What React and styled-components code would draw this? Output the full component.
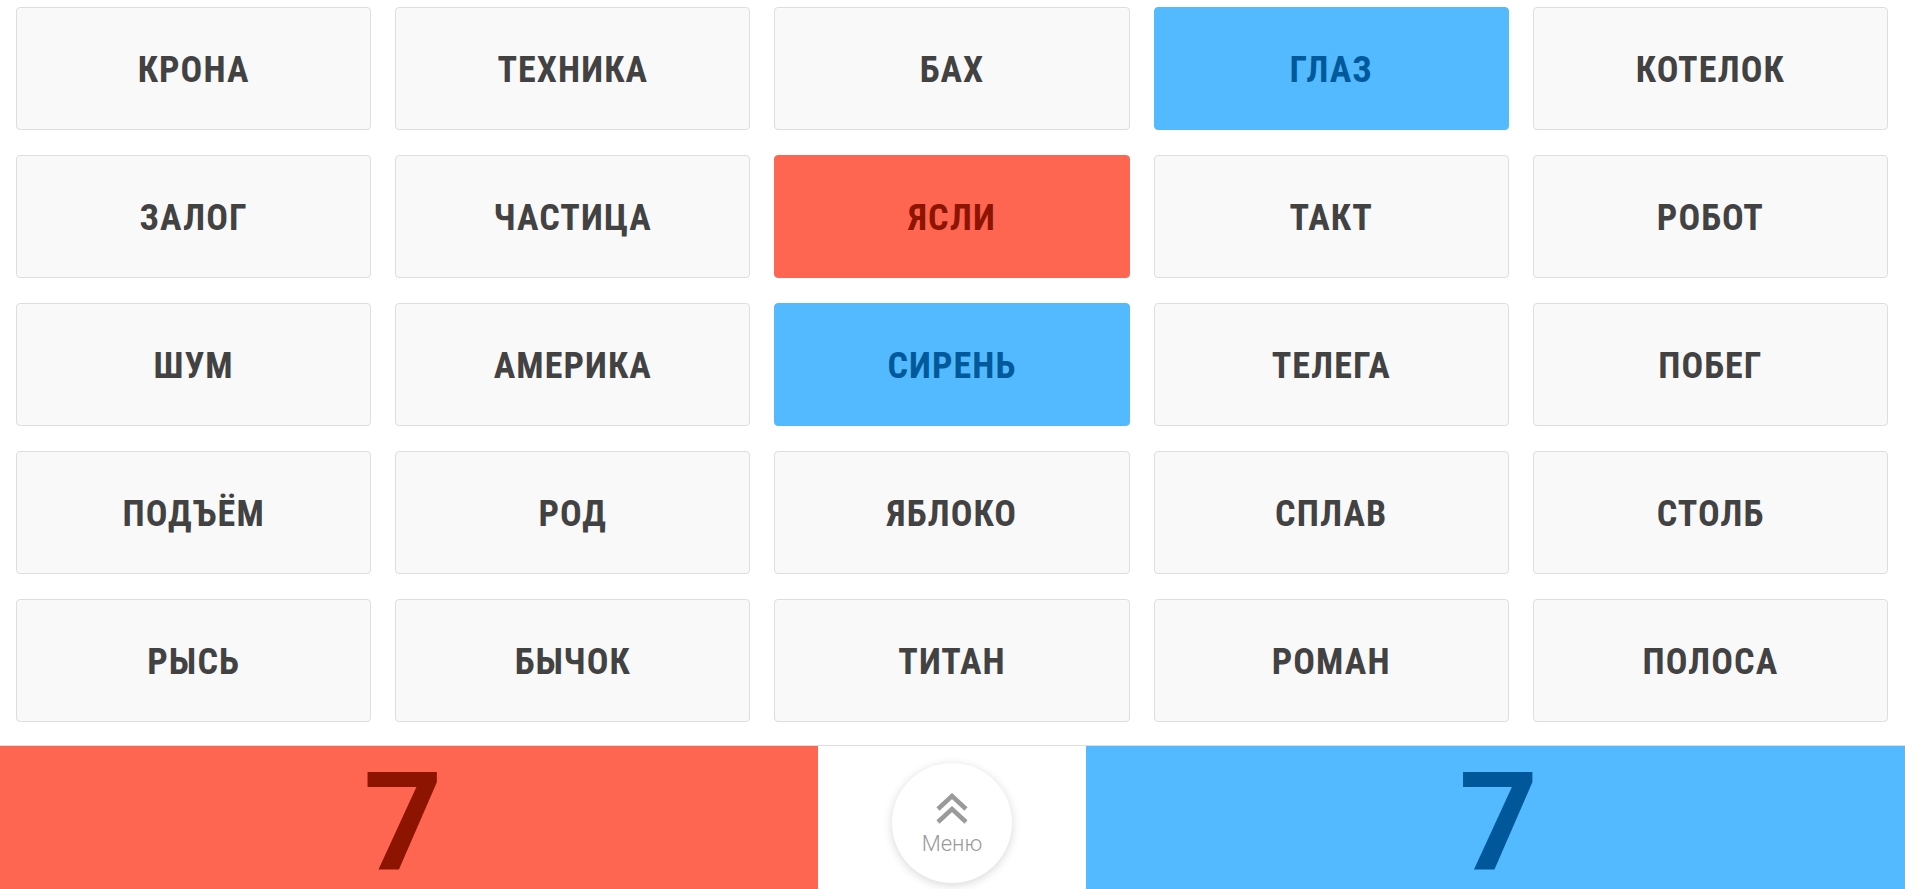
import React from 'react';
import styled, { createGlobalStyle } from 'styled-components';

const GlobalStyle = createGlobalStyle`
    html, body {
        margin: 0;
        padding: 0;
        background: #fff;
        font-family: Roboto, "Liberation Sans", sans-serif;
        overflow: hidden;
    }
`;

const Page = styled.div`
    width: 100%;
    display: flex;
    flex-direction: column;
`;

const Board = styled.div`
    display: grid;
    grid-template-columns: repeat(5, 1fr);
    column-gap: 24px;
    row-gap: 25px;
    padding: 7px 17px 0 16px;
    margin-bottom: 23px;
`;

const cardColors = {
    neutral: { bg: '#f9f9f9', border: '#dedede', text: '#424242' },
    red: { bg: '#ff6652', border: '#ff6652', text: '#8c1400' },
    blue: { bg: '#53baff', border: '#53baff', text: '#00599a' },
};

const Card = styled.div`
    height: 123px;
    box-sizing: border-box;
    padding-top: 3px;
    display: flex;
    align-items: center;
    justify-content: center;
    background: ${p => cardColors[p.$kind].bg};
    border: 1px solid ${p => cardColors[p.$kind].border};
    border-radius: 4px;
    color: ${p => cardColors[p.$kind].text};
    font-size: 36px;
    font-weight: 700;
    font-stretch: condensed;
    letter-spacing: 1.1px;
    text-transform: uppercase;
`;

const ScoreBar = styled.div`
    display: grid;
    grid-template-columns: 818px 1fr 819px;
    height: 154px;
    border-top: 1px solid #dddddd;
`;

const Score = styled.div`
    display: flex;
    align-items: center;
    justify-content: center;
    padding: ${p => (p.$team === 'red' ? '0 12px 0 0' : '0 0 0 6px')};
    background: ${p => (p.$team === 'red' ? '#ff6652' : '#53baff')};
    color: ${p => (p.$team === 'red' ? '#8c1400' : '#00579a')};
    font-size: 138px;
    font-weight: 700;
    line-height: 1;
`;

const MenuCell = styled.div`
    display: flex;
    align-items: center;
    justify-content: center;
    background: #fff;
`;

const MenuButton = styled.button`
    width: 120px;
    height: 120px;
    border-radius: 50%;
    border: none;
    background: #fff;
    box-shadow: 0 2px 10px rgba(0, 0, 0, 0.16);
    display: flex;
    flex-direction: column;
    align-items: center;
    justify-content: center;
    gap: 6px;
    padding: 2px 0 0;
    cursor: pointer;
    color: #9a9a9a;
    font-family: Roboto, "Liberation Sans", sans-serif;
    font-size: 22px;
    font-weight: 300;
`;

const words = [
    ['Крона', 'neutral'], ['Техника', 'neutral'], ['Бах', 'neutral'], ['Глаз', 'blue'], ['Котелок', 'neutral'],
    ['Залог', 'neutral'], ['Частица', 'neutral'], ['Ясли', 'red'], ['Такт', 'neutral'], ['Робот', 'neutral'],
    ['Шум', 'neutral'], ['Америка', 'neutral'], ['Сирень', 'blue'], ['Телега', 'neutral'], ['Побег', 'neutral'],
    ['Подъём', 'neutral'], ['Род', 'neutral'], ['Яблоко', 'neutral'], ['Сплав', 'neutral'], ['Столб', 'neutral'],
    ['Рысь', 'neutral'], ['Бычок', 'neutral'], ['Титан', 'neutral'], ['Роман', 'neutral'], ['Полоса', 'neutral'],
];

const ChevronsUp = () => (
    <svg width="34" height="32" viewBox="0 0 34 32" fill="none" stroke="currentColor" strokeWidth="4.5">
        <polyline points="3,16 17,3 31,16" />
        <polyline points="3,29 17,16 31,29" />
    </svg>
);

const App = () => {
    return (
        <Page>
            <GlobalStyle />
            <Board>
                {words.map(([w, kind]) => (
                    <Card key={w} $kind={kind}>{w}</Card>
                ))}
            </Board>
            <ScoreBar>
                <Score $team="red">7</Score>
                <MenuCell>
                    <MenuButton>
                        <ChevronsUp />
                        Меню
                    </MenuButton>
                </MenuCell>
                <Score $team="blue">7</Score>
            </ScoreBar>
        </Page>
    );
};

export default App;
